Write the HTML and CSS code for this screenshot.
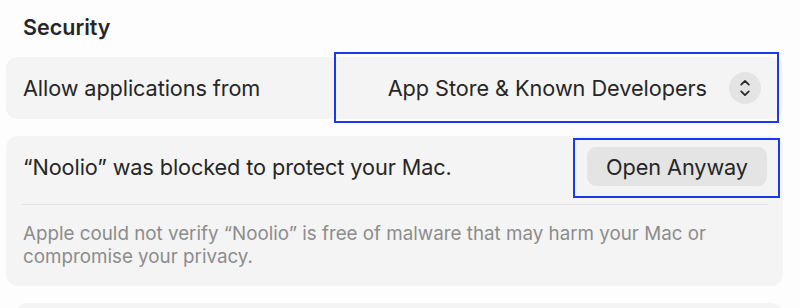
FILE: index.html
```html
<!DOCTYPE html>
<html lang="en">
<head>
<meta charset="utf-8">
<link rel="stylesheet" href="styles.css">
</head>
<body>
<div class="page">
  <h2 class="section-title">Security</h2>
  <div class="card">
    <div class="row row-main">
      <span class="label">Allow applications from</span>
      <div class="popup annot annot-popup">
        <span class="popup-value">App Store &amp; Known Developers</span>
        <span class="stepper">
          <svg width="34" height="32" viewBox="0 0 34 32" aria-hidden="true">
            <circle cx="17" cy="16" r="16" fill="#e4e4e4"/>
            <path d="M13.2 12.6 L17 8.9 L20.8 12.6" fill="none" stroke="#2a2a2a" stroke-width="1.8" stroke-linecap="round" stroke-linejoin="round"/>
            <path d="M13.2 19.4 L17 23.1 L20.8 19.4" fill="none" stroke="#2a2a2a" stroke-width="1.8" stroke-linecap="round" stroke-linejoin="round"/>
          </svg>
        </span>
      </div>
    </div>
  </div>
  <div class="card">
    <div class="row row-blocked">
      <span class="label">“Noolio” was blocked to protect your Mac.</span>
      <button class="btn annot annot-btn">Open Anyway</button>
    </div>
    <div class="separator"></div>
    <p class="note">Apple could not verify “Noolio” is free of malware that may harm your Mac or compromise your privacy.</p>
  </div>
  <div class="card card-next"></div>
</div>
</body>
</html>
```
FILE: styles.css
```css
html, body {
  margin: 0;
  padding: 0;
  background: #fdfdfd;
  height: 308px;
  overflow: hidden;
}
body {
  font-family: Inter, "Noto Sans", "Liberation Sans", sans-serif;
  color: #262626;
}
.page {
  padding: 0 17px 0 6px;
}
.section-title {
  margin: 0;
  padding: 14px 0 0 17px;
  height: 57px;
  box-sizing: border-box;
  font-size: 21.5px;
  font-weight: 600;
  line-height: 26px;
  color: #262626;
}
.card {
  background: #f4f4f4;
  border-radius: 12px;
  margin-bottom: 17px;
}
.row {
  display: flex;
  align-items: center;
  justify-content: space-between;
}
.row-main {
  height: 62px;
  padding: 0 21px 0 17px;
}
.label {
  font-size: 21.7px;
  letter-spacing: -0.1px;
}
.popup {
  display: flex;
  align-items: center;
  gap: 21px;
  font-size: 21.7px;
  letter-spacing: -0.05px;
}
.stepper {
  display: flex;
}
.annot {
  position: relative;
}
.annot::after {
  content: "";
  position: absolute;
  border: 2px solid #1a38f0;
  pointer-events: none;
}
.annot-popup::after {
  top: -20px;
  bottom: -19px;
  left: -54px;
  right: -17px;
}
.row-blocked {
  padding: 11px 16px 18px 17px;
}
.btn {
  font-family: inherit;
  font-size: 21.7px;
  letter-spacing: -0.1px;
  color: #262626;
  background: #e4e4e4;
  border: none;
  border-radius: 9px;
  width: 180px;
  height: 39px;
  padding: 0;
}
.annot-btn::after {
  top: -9px;
  bottom: -12px;
  left: -14px;
  right: -13px;
}
.separator {
  height: 1px;
  background: #e1e1e1;
  margin: 0 15px 0 16px;
}
.note {
  margin: 0;
  padding: 17px 17px 18px 17px;
  font-size: 18.8px;
  line-height: 23px;
  color: #8c8c8c;
}
.card-next {
  height: 40px;
  margin-left: 9px;
}
```
